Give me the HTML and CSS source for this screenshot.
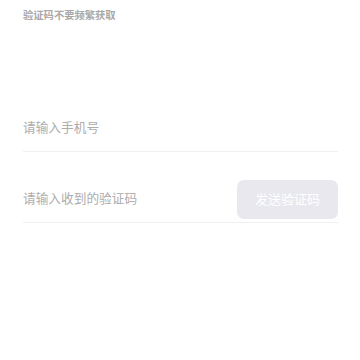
FILE: index.html
```html
<!DOCTYPE html>
<html lang="zh-CN">
  <head>
    <meta charset="utf-8">
    <title>验证码登录</title>
    <meta name="viewport" content="width=device-width, initial-scale=1">
    <link rel="stylesheet" href="styles.css">
  </head>
  <body>
    <div class="container">
      <p class="tip">验证码不要频繁获取</p>
      <div class="form">
        <div class="form-row">
          <input type="text" class="field" placeholder="请输入手机号">
        </div>
        <div class="form-row">
          <input type="text" class="field" placeholder="请输入收到的验证码">
          <button class="send-button">发送验证码</button>
        </div>
      </div>
    </div>
  </body>
</html>
```

FILE: styles.css
```css
body {
  margin: 0;
  padding: 0;
  background-color: #fff;
  font-family: "Noto Sans CJK SC", "Noto Sans", sans-serif;
}
.container {
  padding: 0 22px 0 23px;
}
.tip {
  margin: 0;
  padding-top: 8px;
  font-size: 10.3px;
  line-height: 14px;
  font-weight: bold;
  color: #a8a8a8;
}
.form {
  margin-top: 85px;
}
.form-row {
  display: flex;
  align-items: center;
  height: 44px;
  border-bottom: 1px solid #f0f0f0;
  margin-bottom: 26px;
}
.field {
  flex: 1;
  min-width: 0;
  border: none;
  outline: none;
  padding: 0 0 5px 0;
  font-family: inherit;
  font-size: 12.7px;
  color: #333;
  background: transparent;
}
.field::placeholder {
  color: #adadad;
}
.send-button {
  width: 101px;
  height: 39px;
  margin-bottom: 1px;
  padding: 0 0 2px 0;
  border: none;
  border-radius: 7px;
  background-color: #e8e8ee;
  color: #fff;
  font-family: inherit;
  font-size: 13px;
  cursor: pointer;
}
```
